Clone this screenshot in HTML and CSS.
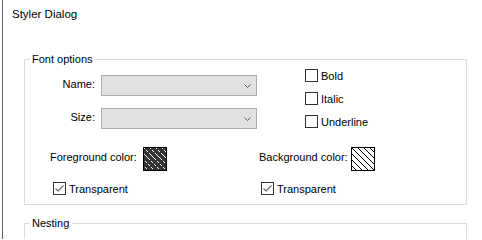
FILE: index.html
```html
<!DOCTYPE html>
<html>
<head>
<meta charset="utf-8">
<link rel="stylesheet" href="styles.css">
</head>
<body>
<div class="frame">
  <div class="title">Styler Dialog</div>
  <fieldset class="group font-group">
    <legend>Font options</legend>
    <div class="top">
      <div class="fields">
        <div class="field">
          <span class="field-label">Name:</span>
          <span class="combo"><svg class="chev" width="7" height="4" viewBox="0 0 7 4"><polyline points="0.5,0.5 3.5,3.5 6.5,0.5" fill="none" stroke="#555" stroke-width="1"/></svg></span>
        </div>
        <div class="field">
          <span class="field-label">Size:</span>
          <span class="combo"><svg class="chev" width="7" height="4" viewBox="0 0 7 4"><polyline points="0.5,0.5 3.5,3.5 6.5,0.5" fill="none" stroke="#555" stroke-width="1"/></svg></span>
        </div>
      </div>
      <div class="checks">
        <div class="check"><span class="box"></span><span class="check-text">Bold</span></div>
        <div class="check"><span class="box"></span><span class="check-text">Italic</span></div>
        <div class="check"><span class="box"></span><span class="check-text">Underline</span></div>
      </div>
    </div>
    <div class="colors">
      <div class="color-col fg">
        <div class="color-row">
          <span class="color-label">Foreground color:</span>
          <svg class="swatch" width="24" height="24" viewBox="0 0 24 24">
            <defs><clipPath id="c1"><rect x="1" y="1" width="22" height="22"/></clipPath></defs>
            <rect x="0.5" y="0.5" width="23" height="23" fill="#353535" stroke="#000"/>
            <g clip-path="url(#c1)" stroke="#f4f4f4" stroke-width="1" stroke-dasharray="3 1" shape-rendering="crispEdges">
              <line x1="-18" y1="0" x2="6" y2="24"/>
              <line x1="-12" y1="0" x2="12" y2="24"/>
              <line x1="-6" y1="0" x2="18" y2="24"/>
              <line x1="0" y1="0" x2="24" y2="24"/>
              <line x1="6" y1="0" x2="30" y2="24"/>
              <line x1="12" y1="0" x2="36" y2="24"/>
              <line x1="18" y1="0" x2="42" y2="24"/>
            </g>
          </svg>
        </div>
        <div class="check"><span class="box"><svg width="11" height="11" viewBox="0 0 11 11"><polyline points="1.5,5.5 4,8 9.5,2.5" fill="none" stroke="#6a6a6a" stroke-width="1.2"/></svg></span><span class="check-text">Transparent</span></div>
      </div>
      <div class="color-col bg">
        <div class="color-row">
          <span class="color-label">Background color:</span>
          <svg class="swatch" width="24" height="24" viewBox="0 0 24 24">
            <defs><clipPath id="c2"><rect x="1" y="1" width="22" height="22"/></clipPath></defs>
            <rect x="0.5" y="0.5" width="23" height="23" fill="#fff" stroke="#000"/>
            <g clip-path="url(#c2)" stroke="#000" stroke-width="1" shape-rendering="crispEdges">
              <line x1="-18" y1="0" x2="6" y2="24"/>
              <line x1="-12" y1="0" x2="12" y2="24"/>
              <line x1="-6" y1="0" x2="18" y2="24"/>
              <line x1="0" y1="0" x2="24" y2="24"/>
              <line x1="6" y1="0" x2="30" y2="24"/>
              <line x1="12" y1="0" x2="36" y2="24"/>
              <line x1="18" y1="0" x2="42" y2="24"/>
            </g>
          </svg>
        </div>
        <div class="check"><span class="box"><svg width="11" height="11" viewBox="0 0 11 11"><polyline points="1.5,5.5 4,8 9.5,2.5" fill="none" stroke="#6a6a6a" stroke-width="1.2"/></svg></span><span class="check-text">Transparent</span></div>
      </div>
    </div>
  </fieldset>
  <fieldset class="group nesting">
    <legend>Nesting</legend>
  </fieldset>
</div>
</body>
</html>
```
FILE: styles.css
```css
html, body {
  margin: 0;
  padding: 0;
  background: #fff;
}
body {
  font-family: "Liberation Sans", Arial, sans-serif;
  font-size: 11px;
  line-height: 14px;
  color: #000;
  overflow: hidden;
  height: 239px;
}
.frame {
  margin-left: 2px;
  border-left: 1px solid #646464;
  height: 239px;
  box-sizing: border-box;
  overflow: hidden;
}
.title {
  padding: 7px 0 0 9px;
  font-size: 11.5px;
  line-height: 14px;
}
.group {
  margin: 0 0 0 21px;
  width: 443px;
  box-sizing: border-box;
  border: 1px solid #dcdcdc;
  padding: 3px 0 9px 0;
  min-width: 0;
}
.group legend {
  margin-left: 5px;
  padding: 0 3px 0 2px;
  line-height: 14px;
}
.font-group {
  margin-top: 31px;
}
.nesting {
  margin-top: 11px;
  height: 30px;
  padding: 0;
  border-bottom: 0;
}
.top {
  display: flex;
}
.fields {
  display: flex;
  flex-direction: column;
  gap: 12px;
  padding-top: 6px;
}
.field {
  display: flex;
  align-items: flex-start;
  gap: 6px;
}
.field-label {
  width: 70px;
  text-align: right;
  padding-top: 2px;
}
.combo {
  width: 156px;
  height: 21px;
  box-sizing: border-box;
  background: #e1e1e1;
  border: 1px solid #adadad;
  display: flex;
  align-items: center;
  justify-content: flex-end;
  padding-right: 5px;
}
.chev {
  display: block;
  margin-top: 1px;
}
.checks {
  margin-left: 48px;
  display: flex;
  flex-direction: column;
  gap: 10px;
}
.check {
  display: flex;
  align-items: center;
  gap: 3px;
  height: 13px;
}
.box {
  width: 13px;
  height: 13px;
  box-sizing: border-box;
  border: 1px solid #333;
  background: #fff;
  flex: none;
  display: flex;
}
.box svg {
  display: block;
}
.colors {
  margin-top: 18px;
  padding-left: 25px;
  display: grid;
  grid-template-columns: 209px 1fr;
}
.color-col {
  display: flex;
  flex-direction: column;
  gap: 11px;
}
.color-row {
  display: flex;
  align-items: flex-start;
  height: 24px;
}
.color-label {
  padding-top: 3px;
  width: 93px;
  white-space: nowrap;
}
.bg .color-label {
  width: 92px;
}
.swatch {
  display: block;
  flex: none;
}
.fg .check {
  margin-left: 3px;
}
.bg .check {
  margin-left: 2px;
}
```
